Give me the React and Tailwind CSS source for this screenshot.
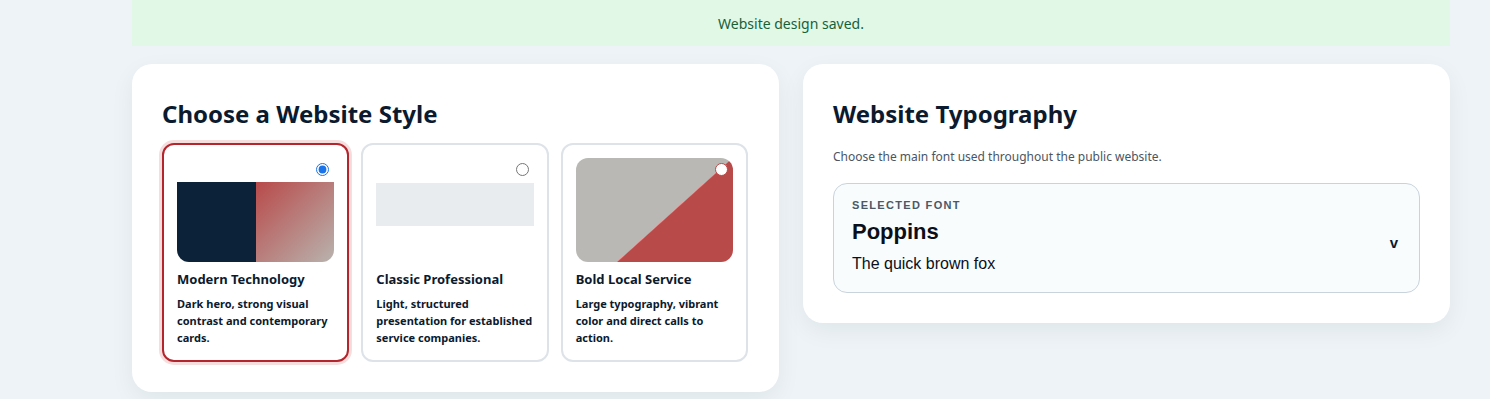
const styles = [
  {
    id: "modern",
    name: "Modern Technology",
    description: "Dark hero, strong visual contrast and contemporary cards.",
    selected: true,
  },
  {
    id: "classic",
    name: "Classic Professional",
    description: "Light, structured presentation for established service companies.",
    selected: false,
  },
  {
    id: "bold",
    name: "Bold Local Service",
    description: "Large typography, vibrant color and direct calls to action.",
    selected: false,
  },
];

function Preview({ id }) {
  if (id === "modern") {
    return (
      <div className="h-[104px] flex flex-col">
        <div className="h-6 bg-white" />
        <div className="flex-1 flex rounded-b-xl overflow-hidden">
          <div className="w-1/2 bg-[#0b2239]" />
          <div className="w-1/2 bg-[linear-gradient(135deg,#b84a4a,#b8b3ae)]" />
        </div>
      </div>
    );
  }
  if (id === "classic") {
    return (
      <div className="h-[104px] pt-[25px]">
        <div className="h-[43px] bg-[#e8ecef]" />
      </div>
    );
  }
  return (
    <div className="h-[104px] rounded-xl bg-[linear-gradient(138deg,#b9b8b4_57.2%,#f0a0a0_57.2%,#b84a4a_57.8%)]" />
  );
}

function StyleOption({ option }) {
  return (
    <label
      className={`relative flex flex-col rounded-xl border-2 bg-white px-[13px] pt-[13px] pb-[14px] cursor-pointer ${
        option.selected
          ? "border-[#b3262d] shadow-[0_0_0_3px_#f6dede]"
          : "border-[#dde3e8]"
      }`}
    >
      <input
        type="radio"
        name="website-style"
        checked={option.selected}
        readOnly
        className={`absolute top-[18px] right-[18px] m-0 w-[13px] h-[13px] ${
          option.id === "bold" ? "appearance-none rounded-full bg-white border border-[#b84a4a]" : "accent-[#1a73e8]"
        }`}
      />
      <Preview id={option.id} />
      <h3 className="mt-[8px] text-[13px] font-bold leading-[18px] text-[#0b1a2e]">{option.name}</h3>
      <p className="mt-[7px] text-[11px] font-bold leading-[17px] text-[#0b1a2e]">{option.description}</p>
    </label>
  );
}

export default function App() {
  return (
    <div className="min-h-[399px] bg-[#edf3f6] pl-[132px] pr-[40px] font-['Noto_Sans',sans-serif]">
      <div className="h-[46px] bg-[#e1f8e6] flex items-center justify-center text-[14px] text-[#17613a]">
        Website design saved.
      </div>

      <div className="mt-[18px] flex items-start gap-6">
        <section className="flex-1 rounded-[20px] bg-white px-[30px] pt-[34px] pb-[30px] shadow-[0_8px_24px_rgba(15,40,70,0.06)]">
          <h2 className="text-[24px] font-bold leading-8 text-[#0b1a2e]">Choose a Website Style</h2>
          <div className="mt-[13px] grid grid-cols-3 gap-3 w-[586px]">
            {styles.map((option) => (
              <StyleOption key={option.id} option={option} />
            ))}
          </div>
        </section>

        <section className="flex-1 rounded-[20px] bg-white px-[30px] pt-[34px] pb-[30px] shadow-[0_8px_24px_rgba(15,40,70,0.06)]">
          <h2 className="text-[24px] font-bold leading-8 text-[#0b1a2e]">Website Typography</h2>
          <p className="mt-[19px] text-[12px] leading-4 text-[#4b5563]">
            Choose the main font used throughout the public website.
          </p>
          <button
            type="button"
            className="mt-[18px] w-full flex items-center justify-between rounded-[14px] border border-[#c9d3dc] bg-[#f8fcfd] pl-[18px] pr-[20px] pt-[13px] pb-[18px] text-left font-['Liberation_Sans',Arial,sans-serif]"
          >
            <span className="flex flex-col">
              <span className="text-[11px] font-bold tracking-[0.12em] text-[#4b5966] leading-4">SELECTED FONT</span>
              <span className="mt-[5px] text-[22px] font-bold leading-7 text-[#0b0f19]">Poppins</span>
              <span className="mt-[8px] text-[16px] leading-5 text-[#0b0f19]">The quick brown fox</span>
            </span>
            <span className="text-[15px] font-bold text-[#0b1a2e] mt-[16px] mr-[1px]">v</span>
          </button>
        </section>
      </div>
    </div>
  );
}
